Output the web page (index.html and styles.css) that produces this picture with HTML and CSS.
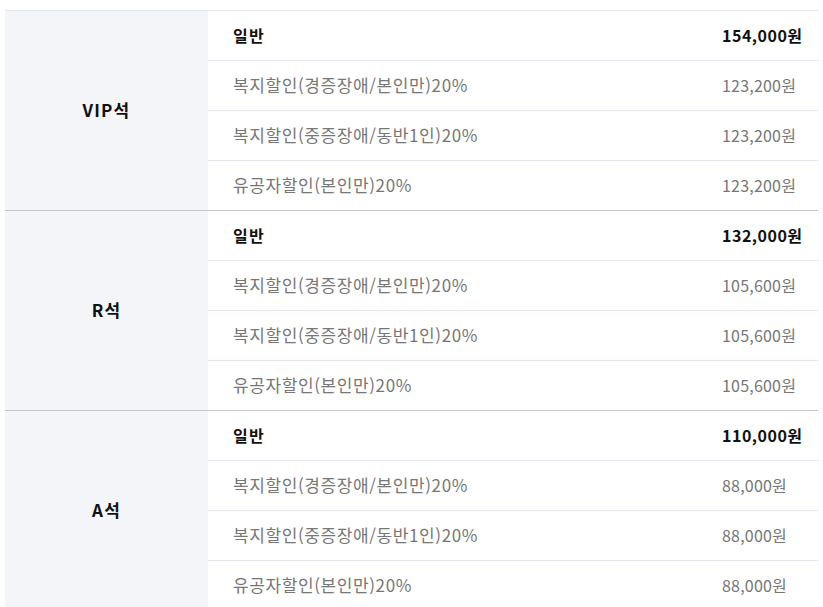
FILE: index.html
```html
<!DOCTYPE html>
<html lang="ko">

<head>
    <meta charset="utf-8">
    <title>좌석별 가격</title>
    <link rel="stylesheet" href="styles.css">
</head>

<body>
    <table class="price-table">
        <tbody class="seat-group">
            <tr>
                <th rowspan="4" class="seat-name">VIP석</th>
                <td class="discount main">일반</td>
                <td class="price main">154,000원</td>
            </tr>
            <tr>
                <td class="discount">복지할인(경증장애/본인만)20%</td>
                <td class="price">123,200원</td>
            </tr>
            <tr>
                <td class="discount">복지할인(중증장애/동반1인)20%</td>
                <td class="price">123,200원</td>
            </tr>
            <tr>
                <td class="discount">유공자할인(본인만)20%</td>
                <td class="price">123,200원</td>
            </tr>
        </tbody>
        <tbody class="seat-group">
            <tr>
                <th rowspan="4" class="seat-name">R석</th>
                <td class="discount main">일반</td>
                <td class="price main">132,000원</td>
            </tr>
            <tr>
                <td class="discount">복지할인(경증장애/본인만)20%</td>
                <td class="price">105,600원</td>
            </tr>
            <tr>
                <td class="discount">복지할인(중증장애/동반1인)20%</td>
                <td class="price">105,600원</td>
            </tr>
            <tr>
                <td class="discount">유공자할인(본인만)20%</td>
                <td class="price">105,600원</td>
            </tr>
        </tbody>
        <tbody class="seat-group">
            <tr>
                <th rowspan="4" class="seat-name">A석</th>
                <td class="discount main">일반</td>
                <td class="price main">110,000원</td>
            </tr>
            <tr>
                <td class="discount">복지할인(경증장애/본인만)20%</td>
                <td class="price">88,000원</td>
            </tr>
            <tr>
                <td class="discount">복지할인(중증장애/동반1인)20%</td>
                <td class="price">88,000원</td>
            </tr>
            <tr>
                <td class="discount">유공자할인(본인만)20%</td>
                <td class="price">88,000원</td>
            </tr>
        </tbody>
    </table>
</body>

</html>
```

FILE: styles.css
```css
body {
    margin: 0;
    padding: 10px 5px;
    background: #fff;
    font-family: "Noto Sans CJK KR", "Noto Sans", sans-serif;
}

.price-table {
    width: 813px;
    border-collapse: collapse;
    table-layout: fixed;
    border-top: 1px solid #e3e6ee;
}

.seat-group {
    border-top: 1px solid #c3c6cf;
}

.seat-group:first-of-type {
    border-top: 1px solid #e3e6ee;
}

.price-table td,
.price-table th {
    height: 47px;
    padding: 0 0 2px;
    border-top: 1px solid #e3e6ee;
    vertical-align: middle;
    font-size: 16px;
}

.seat-group tr:first-child td,
.seat-group tr:first-child th {
    border-top: none;
}

.seat-name {
    width: 203px;
    background: #f4f5f9;
    color: #111;
    font-weight: 700;
    text-align: center;
}

.price-table .seat-name {
    font-size: 17px;
    letter-spacing: 1.2px;
}

.price-table .discount {
    padding-left: 25px;
    color: #777;
    font-size: 17px;
    letter-spacing: 0.6px;
}

.price {
    width: 96px;
    color: #777;
    text-align: left;
    letter-spacing: 0.2px;
}

.price-table .main {
    color: #111;
    font-weight: 700;
    font-size: 16px;
    letter-spacing: 1.4px;
}

.price-table .price.main {
    letter-spacing: 0.5px;
}
```
